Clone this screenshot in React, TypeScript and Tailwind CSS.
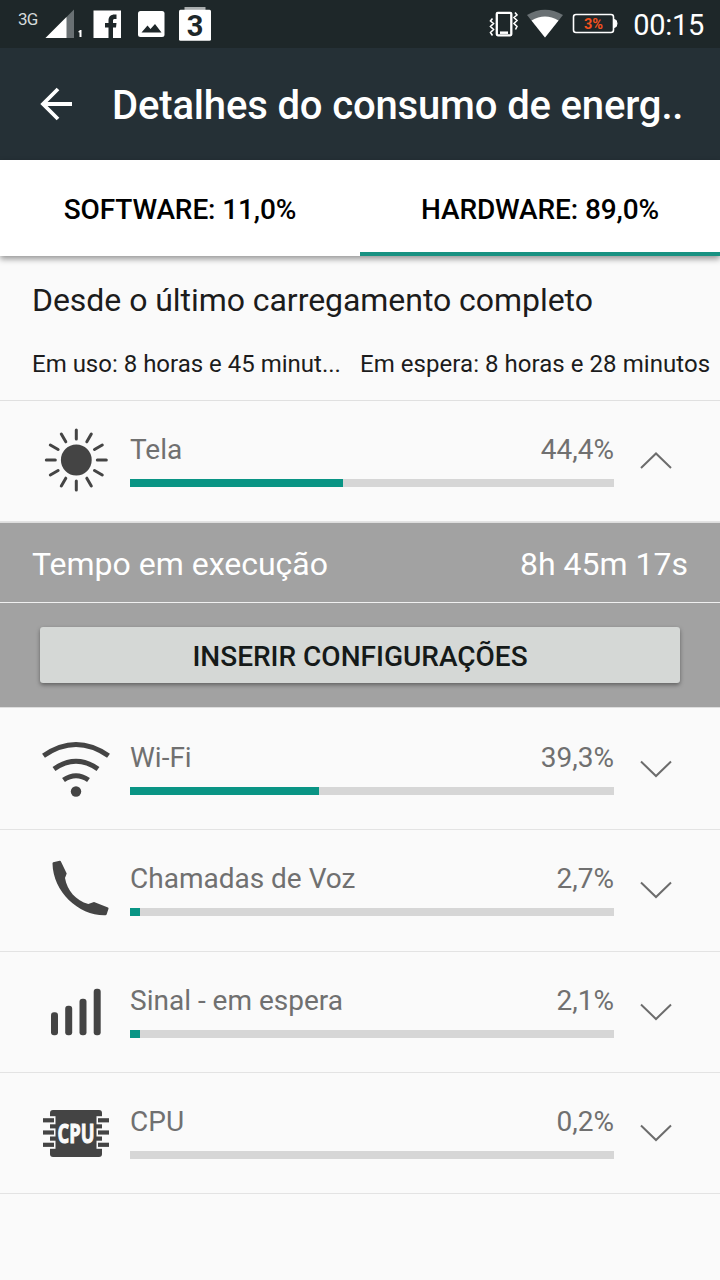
import type { ReactNode } from "react";

type UsageItem = {
    name: string;
    label: string;
    percent: number;
    icon: ReactNode;
    open?: boolean;
};

function SunIcon() {
    const angles = [0, 30, 60, 90, 120, 150, 180, 210, 240, 270, 300, 330];
    return (
        <svg viewBox="0 0 88 88" className="size-[88px]">
            <circle cx="44.3" cy="44" r="15.4" fill="#444" />
            {angles.map((a) => (
                <path
                    key={a}
                    d="M44.3 14V23"
                    stroke="#444"
                    strokeWidth="3"
                    strokeLinecap="round"
                    transform={`rotate(${a} 44.3 44)`}
                />
            ))}
        </svg>
    );
}

function WifiIcon() {
    return (
        <svg viewBox="0 0 88 88" className="size-[88px]" fill="none" stroke="#444" strokeWidth="5">
            <path d="M11.5 31.8Q44 9.3 76.5 31.8" />
            <path d="M22 45Q44 29.5 66 45" />
            <path d="M31.5 56Q44 47.5 56.5 56" />
            <circle cx="44" cy="67.5" r="5.2" fill="#444" stroke="none" />
        </svg>
    );
}

function PhoneIcon() {
    return (
        <svg viewBox="0 0 88 88" className="size-[88px]" fill="#444">
            <path d="M21.2 17.3L27.7 15.7Q28.500 15.500 28.800 16.300L34.700 28.500L33 33C35 45 44 56 56.300 59L62 57L76 62.600Q76.700 63 76.500 63.800L74.700 69.300Q74.400 70.300 73.400 70.300C47 71 21 47 20.500 18.500Q20.500 17.500 21.200 17.300Z" />
        </svg>
    );
}

function SignalIcon() {
    return (
        <svg viewBox="0 0 88 88" className="size-[88px]" fill="#444">
            <rect x="19" y="45.3" width="7" height="23" rx="3" />
            <rect x="33.2" y="38.8" width="7" height="29.5" rx="3" />
            <rect x="47.5" y="31.8" width="7" height="36.5" rx="3" />
            <rect x="61.7" y="21.8" width="7" height="46.5" rx="3" />
        </svg>
    );
}

function CpuIcon() {
    return (
        <svg viewBox="0 0 88 88" className="size-[88px]">
            <rect x="18" y="22" width="52" height="47" rx="3" fill="#444" />
            {[31, 43.2, 55.5].map((y) => (
                <g key={y}>
                    <path d={`M17 ${y - 2.8}H23.5V${y + 5.3}H17Z`} fill="#fafafa" />
                    <path d={`M71 ${y - 2.8}H64.5V${y + 5.3}H71Z`} fill="#fafafa" />
                    <path d={`M11 ${y - 0.8}H22V${y + 3.4}H11Z`} fill="#444" />
                    <path d={`M77 ${y - 0.8}H66V${y + 3.4}H77Z`} fill="#444" />
                </g>
            ))}
            <text
                x="44"
                y="54.5"
                textAnchor="middle"
                textLength="37"
                lengthAdjust="spacingAndGlyphs"
                fontFamily="Open Sans, sans-serif"
                fontWeight="700"
                fontSize="27"
                fill="#fafafa"
                stroke="#fafafa"
                strokeWidth="1.1"
            >
                CPU
            </text>
        </svg>
    );
}

const screenItem: UsageItem = { name: "Tela", label: "44,4%", percent: 44, icon: <SunIcon />, open: true };

const items: UsageItem[] = [
    { name: "Wi-Fi", label: "39,3%", percent: 39, icon: <WifiIcon /> },
    { name: "Chamadas de Voz", label: "2,7%", percent: 2, icon: <PhoneIcon /> },
    { name: "Sinal - em espera", label: "2,1%", percent: 2, icon: <SignalIcon /> },
    { name: "CPU", label: "0,2%", percent: 0, icon: <CpuIcon /> },
];

function UsageRow({ item }: { item: UsageItem }) {
    return (
        <div className="flex h-[121.33px] border-b border-[#e3e3e3] pl-8">
            <div className="w-[98px] shrink-0 pt-[15px]">{item.icon}</div>
            <div className="w-[484px] pt-[29px]">
                <div className="flex h-10 justify-between text-[28px] leading-10 text-[#707070]">
                    <span>{item.name}</span>
                    <span>{item.label}</span>
                </div>
                <div className="mt-[9px] h-2 bg-[#d6d6d6]">
                    <div className="h-2 bg-[#099484]" style={{ width: `${item.percent}%` }} />
                </div>
            </div>
            <svg
                viewBox="0 0 32 18"
                className="ml-[26px] mt-[51px] h-[18px] w-8"
                fill="none"
                stroke="#6c6c6c"
                strokeWidth="2"
            >
                <path d={item.open ? "M1 16L16 1.5L31 16" : "M1 1.5L16 16L31 1.5"} />
            </svg>
        </div>
    );
}

function StatusBar() {
    return (
        <div className="flex h-12 bg-[#1e2729] text-white">
            <span className="ml-[18px] mt-[9px] w-[27px] text-[17px] leading-5 tracking-[-0.8px] text-[#d5dadb]">3G</span>
            <svg viewBox="0 0 38 48" className="h-12 w-[38px]" fill="#fff">
                <path d="M0.5 38L29 9.5V38Z" fill="#697073" />
                <path d="M0.5 38L21.5 17V38Z" />
                <path d="M33 32L35 30H36.5V37H34.5V32.5Z" />
            </svg>
            <svg viewBox="0 0 28 48" className="ml-[10px] h-12 w-7" fill="#fff">
                <rect x="0.5" y="10.5" width="27.5" height="27.5" />
                <path
                    d="M15.5 38V27.5H12V23H15.5V20.5C15.5 16.5 18 14.5 21.5 14.5H23.5V19H21.8C20.5 19 20 19.6 20 20.8V23H23.5L23 27.5H20V38Z"
                    fill="#1e2729"
                />
            </svg>
            <svg viewBox="0 0 28 48" className="ml-[17px] h-12 w-7">
                <rect x="0" y="11" width="26.5" height="26" rx="2.5" fill="#fff" />
                <path d="M3.500 32.5L9.5 25.5L12.5 29L17 24L23.5 32.5Z" fill="#1e2729" />
            </svg>
            <svg viewBox="0 0 34 48" className="ml-[12px] mr-px h-12 w-[34px]">
                <rect x="6.5" y="7" width="21" height="5" fill="#a9adae" />
                <rect x="1" y="9.8" width="32" height="31" rx="1.5" fill="#fff" />
                <text x="17" y="35.5" textAnchor="middle" fontSize="29" fontWeight="700" fill="#1e2729">
                    3
                </text>
            </svg>
            <svg viewBox="0 0 30 48" className="ml-auto mr-[8px] h-12 w-[30px]" fill="none" stroke="#fff">
                <rect x="7.8" y="12.8" width="14.5" height="22.5" rx="1" strokeWidth="2.3" />
                <path d="M11 32.7H19" strokeWidth="2.5" />
                <path
                    d="M3.5 18.5L1.5 21L4.5 23.5L1.5 26.5L4.5 29.5L1.5 32.5L3.5 35.5M26 12.5L28 15L25 17.5L28 20.5L25 23.5L28 26.5L26.5 29.5"
                    strokeWidth="1.6"
                />
            </svg>
            <svg viewBox="0 0 36 48" className="mr-[9px] h-12 w-9">
                <path d="M0 15Q18 4.5 36 15L18 37.5Z" fill="#697073" />
                <path d="M4.5 20.5Q18 12.5 31.5 20.5L18 37.5Z" fill="#fff" />
            </svg>
            <svg viewBox="0 0 46 48" className="h-12 w-[46px]">
                <rect x="1.5" y="14.5" width="40" height="18" rx="2.5" fill="none" stroke="#fff" strokeWidth="1.6" />
                <path d="M42 19.5Q45 19.5 45 23.5Q45 27.5 42 27.5Z" fill="#fff" stroke="#fff" strokeWidth="1" />
                <text x="21.5" y="28.8" textAnchor="middle" fontSize="14.5" fontWeight="700" fill="#f4511e">
                    3%
                </text>
            </svg>
            <span className="ml-[15px] mr-4 mt-[5px] text-[29px] leading-10 tracking-[-0.3px]">00:15</span>
        </div>
    );
}

export default function App() {
    return (
        <div className="h-[1280px] w-[720px] overflow-hidden bg-[#fafafa] font-[Roboto,sans-serif]">
            <StatusBar />
            <header className="flex h-28 items-center bg-[#253036] text-white">
                <svg
                    viewBox="0 0 34 34"
                    className="ml-10 size-[34px]"
                    fill="none"
                    stroke="#fff"
                    strokeWidth="3.8"
                >
                    <path d="M32 17H3M18 2L3 17L18 32" />
                </svg>
                <h1 className="ml-[38px] whitespace-nowrap pt-[4px] text-[40px] font-medium tracking-[-0.15px]">
                    Detalhes do consumo de energ..
                </h1>
            </header>

            <div className="relative flex h-24 bg-white text-center text-[28px] font-medium leading-[100px] tracking-[-0.1px] text-black shadow-[0_3px_6px_rgba(0,0,0,0.4)]">
                <div className="w-1/2">SOFTWARE: 11,0%</div>
                <div className="w-1/2 border-b-4 border-[#189282]">HARDWARE: 89,0%</div>
            </div>

            <section className="flex h-[145px] flex-col whitespace-nowrap border-b border-[#e0e0e0] pl-8 text-[#1c1c1c]">
                <h2 className="pt-6 text-[32px] leading-10 tracking-[-0.05px]">Desde o último carregamento completo</h2>
                <div className="flex pt-6 text-[24px] leading-10">
                    <span className="w-[328px]">Em uso: 8 horas e 45 minut...</span>
                    <span className="tracking-[0.05px]">Em espera: 8 horas e 28 minutos</span>
                </div>
            </section>

            <UsageRow item={screenItem} />
            <div className="mb-px h-[185.67px] border-y border-[#dedede] bg-[#a2a2a2]">
                <div className="flex h-20 justify-between border-b border-[#f0f0f0] px-8 text-[32px] leading-[82px] text-white">
                    <span>Tempo em execução</span>
                    <span>8h 45m 17s</span>
                </div>
                <div className="px-10 pt-6">
                    <button className="h-14 w-full rounded-[3px] bg-[#d5d8d6] pt-[3px] text-[28px] font-medium text-[#151a19] shadow-[0_2px_4px_rgba(0,0,0,0.4)]">
                        INSERIR CONFIGURAÇÕES
                    </button>
                </div>
            </div>
            {items.map((item) => (
                <UsageRow key={item.name} item={item} />
            ))}
        </div>
    );
}
